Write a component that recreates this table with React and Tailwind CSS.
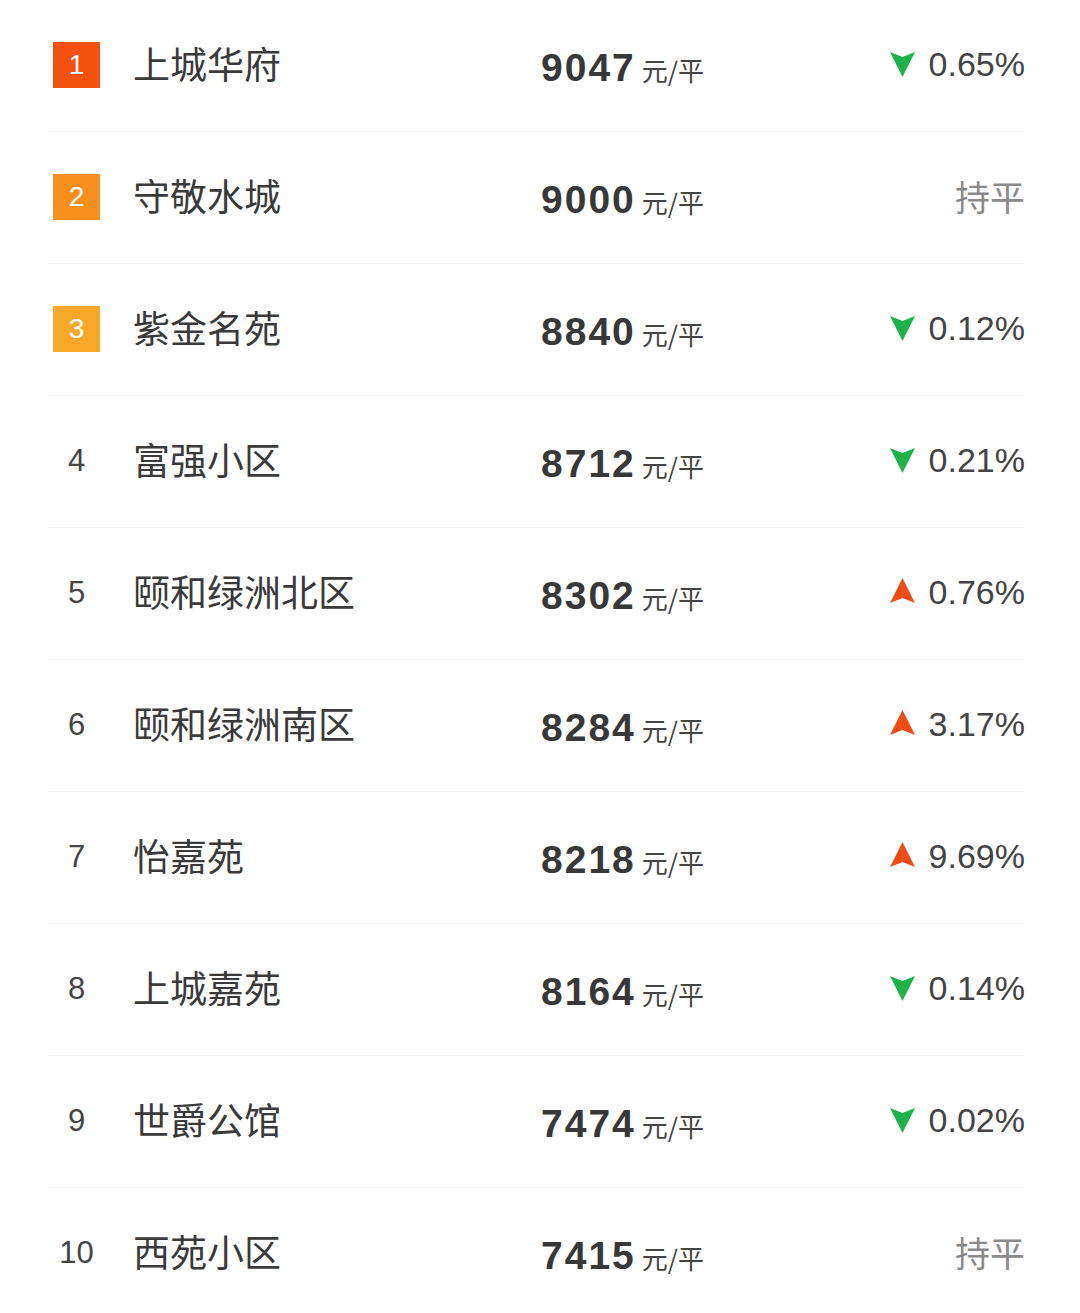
import React from "react";

const rows = [
  { rank: 1, name: "上城华府", price: 9047, dir: "down", change: "0.65%" },
  { rank: 2, name: "守敬水城", price: 9000, dir: "flat" },
  { rank: 3, name: "紫金名苑", price: 8840, dir: "down", change: "0.12%" },
  { rank: 4, name: "富强小区", price: 8712, dir: "down", change: "0.21%" },
  { rank: 5, name: "颐和绿洲北区", price: 8302, dir: "up", change: "0.76%" },
  { rank: 6, name: "颐和绿洲南区", price: 8284, dir: "up", change: "3.17%" },
  { rank: 7, name: "怡嘉苑", price: 8218, dir: "up", change: "9.69%" },
  { rank: 8, name: "上城嘉苑", price: 8164, dir: "down", change: "0.14%" },
  { rank: 9, name: "世爵公馆", price: 7474, dir: "down", change: "0.02%" },
  { rank: 10, name: "西苑小区", price: 7415, dir: "flat" },
];

const badgeColors = {
  1: "bg-[#f4510f]",
  2: "bg-[#f7901d]",
  3: "bg-[#f7a829]",
};

const sans = "font-['Liberation_Sans','Noto_Sans_CJK_SC',sans-serif]";
const cjk = "font-['Noto_Sans_CJK_SC',sans-serif]";

function Arrow({ dir }) {
  if (dir === "down") {
    return (
      <svg width="25" height="25" viewBox="0 0 25 25" className="mt-[2px]">
        <path d="M0 0 L12.5 5 L25 0 L12.5 25 Z" fill="#1fb24a" />
      </svg>
    );
  }
  return (
    <svg width="25" height="25" viewBox="0 0 25 25" className="-mt-[2px]">
      <path d="M0 25 L12.5 20 L25 25 L12.5 0 Z" fill="#f24c16" />
    </svg>
  );
}

function Rank({ rank }) {
  if (rank <= 3) {
    return (
      <div
        className={`flex h-[46px] w-[47px] items-center justify-center text-[28px] leading-none text-white ${badgeColors[rank]} ${sans}`}
      >
        {rank}
      </div>
    );
  }
  return (
    <div className={`flex w-[47px] justify-center text-[31px] leading-none text-[#444] ${sans}`}>
      {rank}
    </div>
  );
}

export default function App() {
  return (
    <div className="h-[1313px] w-[1080px] overflow-hidden bg-white">
      {rows.map((row) => (
        <div key={row.rank} className="ml-[48px] mr-[55px] flex h-[132px] items-center border-b border-[#f8f2f2] pl-[5px]">
          <div className="w-[80px] shrink-0 pb-[2px]">
            <Rank rank={row.rank} />
          </div>
          <div className={`w-[408px] shrink-0 pb-[4px] text-[37px] leading-none text-[#3a3a3a] ${cjk}`}>{row.name}</div>
          <div className="flex items-baseline pt-[4px]">
            <span className={`text-[39px] font-bold leading-none tracking-[2px] text-[#383838] ${sans}`}>
              {row.price}
            </span>
            <span className={`ml-[6px] text-[26px] leading-none text-[#444] ${cjk}`}>元/平</span>
          </div>
          <div className="flex flex-1 items-center justify-end pb-[4px]">
            {row.dir === "flat" ? (
              <span className={`text-[35px] leading-none text-[#8a8a8a] ${cjk}`}>持平</span>
            ) : (
              <>
                <Arrow dir={row.dir} />
                <span className={`ml-[14px] text-[34px] leading-none text-[#444] ${sans}`}>{row.change}</span>
              </>
            )}
          </div>
        </div>
      ))}
    </div>
  );
}
